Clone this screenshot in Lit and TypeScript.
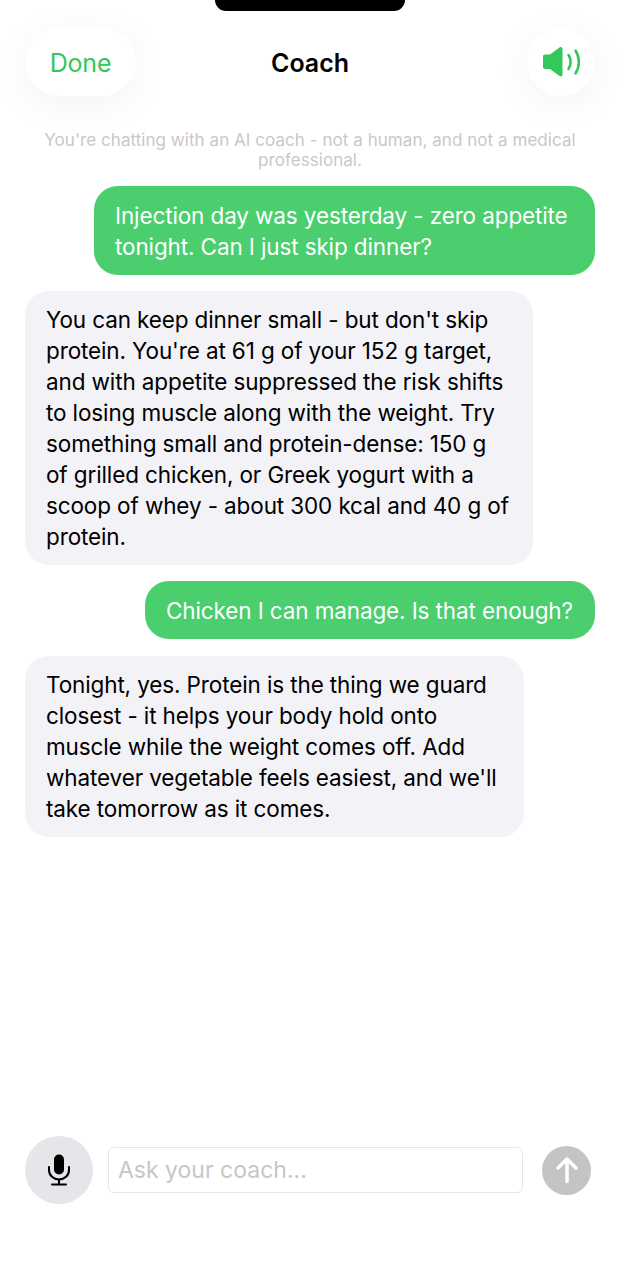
import { LitElement, html, css } from 'lit';
import { customElement } from 'lit/decorators.js';

interface Message {
  from: 'user' | 'coach';
  text: string;
  width: number;
}

const MESSAGES: Message[] = [
  { from: 'user', text: 'Injection day was yesterday - zero appetite tonight. Can I just skip dinner?', width: 501 },
  {
    from: 'coach',
    text: "You can keep dinner small - but don't skip protein. You're at 61 g of your 152 g target, and with appetite suppressed the risk shifts to losing muscle along with the weight. Try something small and protein-dense: 150 g of grilled chicken, or Greek yogurt with a scoop of whey - about 300 kcal and 40 g of protein.",
    width: 508,
  },
  { from: 'user', text: 'Chicken I can manage. Is that enough?', width: 450 },
  {
    from: 'coach',
    text: "Tonight, yes. Protein is the thing we guard closest - it helps your body hold onto muscle while the weight comes off. Add whatever vegetable feels easiest, and we'll take tomorrow as it comes.",
    width: 499,
  },
];

@customElement('app-root')
export class AppRoot extends LitElement {
  static styles = css`
    :host {
      display: block;
      background: #fff;
      font-family: Inter, 'Liberation Sans', sans-serif;
    }
    .screen {
      height: 1281px;
      display: flex;
      flex-direction: column;
      overflow: hidden;
    }
    .notch {
      width: 190px;
      height: 11px;
      background: #000;
      border-radius: 0 0 18px 18px;
      align-self: center;
      flex: none;
    }
    .header {
      display: grid;
      grid-template-columns: 1fr auto 1fr;
      align-items: center;
      margin-top: 17px;
      padding: 0 25px;
    }
    .pill {
      box-sizing: border-box;
      height: 68px;
      padding-top: 2px;
      border-radius: 34px;
      background: #fff;
      box-shadow: 0 8px 40px rgba(0, 0, 0, 0.05);
      display: flex;
      align-items: center;
      justify-content: center;
    }
    .done {
      width: 111px;
      color: #34c759;
      font-size: 25px;
      font-weight: 400;
      letter-spacing: -0.2px;
    }
    .sound {
      width: 68px;
      padding-top: 0;
      justify-self: end;
    }
    .title {
      padding-top: 2px;
      font-size: 25px;
      font-weight: 600;
      color: #000;
      letter-spacing: -0.05px;
    }
    .notice {
      margin: 34px 40px 0;
      text-align: center;
      font-size: 17px;
      line-height: 20px;
      letter-spacing: 0.05px;
      color: #c8c8ca;
    }
    .thread {
      flex: 1;
      display: flex;
      flex-direction: column;
      gap: 16.2px;
      padding: 16px 25px 0;
    }
    .bubble {
      box-sizing: border-box;
      padding: 13.5px 21px;
      border-radius: 24px;
      font-size: 22.5px;
      line-height: 31px;
      letter-spacing: -0.12px;
    }
    .user {
      align-self: flex-end;
      background: #4ace6e;
      color: #fff;
    }
    .coach {
      align-self: flex-start;
      padding: 13px 21px;
      background: #f2f2f7;
      color: #000;
    }
    .composer {
      display: flex;
      align-items: center;
      padding: 0 29px 77px 25px;
    }
    .mic {
      width: 68px;
      height: 68px;
      border-radius: 50%;
      background: #e5e5ea;
      display: flex;
      align-items: center;
      justify-content: center;
      flex: none;
    }
    .field {
      box-sizing: border-box;
      width: 415px;
      height: 46px;
      margin: 0 19px 0 15px;
      padding: 0 9px;
      border: 1px solid #e5e5e8;
      border-radius: 6px;
      display: flex;
      align-items: center;
      font-size: 23px;
      color: #c6c6c8;
      flex: none;
    }
    .send {
      width: 49px;
      height: 49px;
      border-radius: 50%;
      background: #c4c4c6;
      display: flex;
      align-items: center;
      justify-content: center;
      flex: none;
    }
  `;

  render() {
    return html`
      <div class="screen">
        <div class="notch"></div>
        <div class="header">
          <div class="pill done">Done</div>
          <div class="title">Coach</div>
          <div class="pill sound">
            <svg width="40" height="32" viewBox="0 0 40 32">
              <path
                d="M4 8.500h5L18.500 1.500c1.500-1 3-.3 3 1.500v25.500c0 1.800-1.500 2.500-3 1.500L9 23H4c-1.300 0-2-.8-2-2V10.500c0-1.200.7-2 2-2z"
                fill="#34c759"
              />
              <path d="M27.500 9c2.800 4 2.800 10 0 14" fill="none" stroke="#34c759" stroke-width="2.600" stroke-linecap="round" />
              <path d="M34.500 4.500c4.500 7 4.500 16 0 23" fill="none" stroke="#34c759" stroke-width="2.600" stroke-linecap="round" />
            </svg>
          </div>
        </div>
        <div class="notice">You're chatting with an AI coach - not a human, and not a medical professional.</div>
        <div class="thread">
          ${MESSAGES.map(
            (m) => html`<div class="bubble ${m.from}" style="width: ${m.width}px">${m.text}</div>`
          )}
        </div>
        <div class="composer">
          <div class="mic">
            <svg width="24" height="32" viewBox="0 0 24 32">
              <rect x="7" y="0.500" width="10" height="20" rx="5" fill="#000" />
              <path d="M2 13v3c0 5.500 4.500 9.500 10 9.500s10-4 10-9.500v-3" fill="none" stroke="#000" stroke-width="2" stroke-linecap="round" />
              <path d="M12 25.500V30M5 30.500h14" fill="none" stroke="#000" stroke-width="2" stroke-linecap="round" />
            </svg>
          </div>
          <div class="field">Ask your coach...</div>
          <div class="send">
            <svg width="24" height="28" viewBox="0 0 24 28">
              <path d="M12 25.500V3M3 12l9-9 9 9" fill="none" stroke="#fff" stroke-width="3.500" stroke-linecap="round" stroke-linejoin="round" />
            </svg>
          </div>
        </div>
      </div>
    `;
  }
}
